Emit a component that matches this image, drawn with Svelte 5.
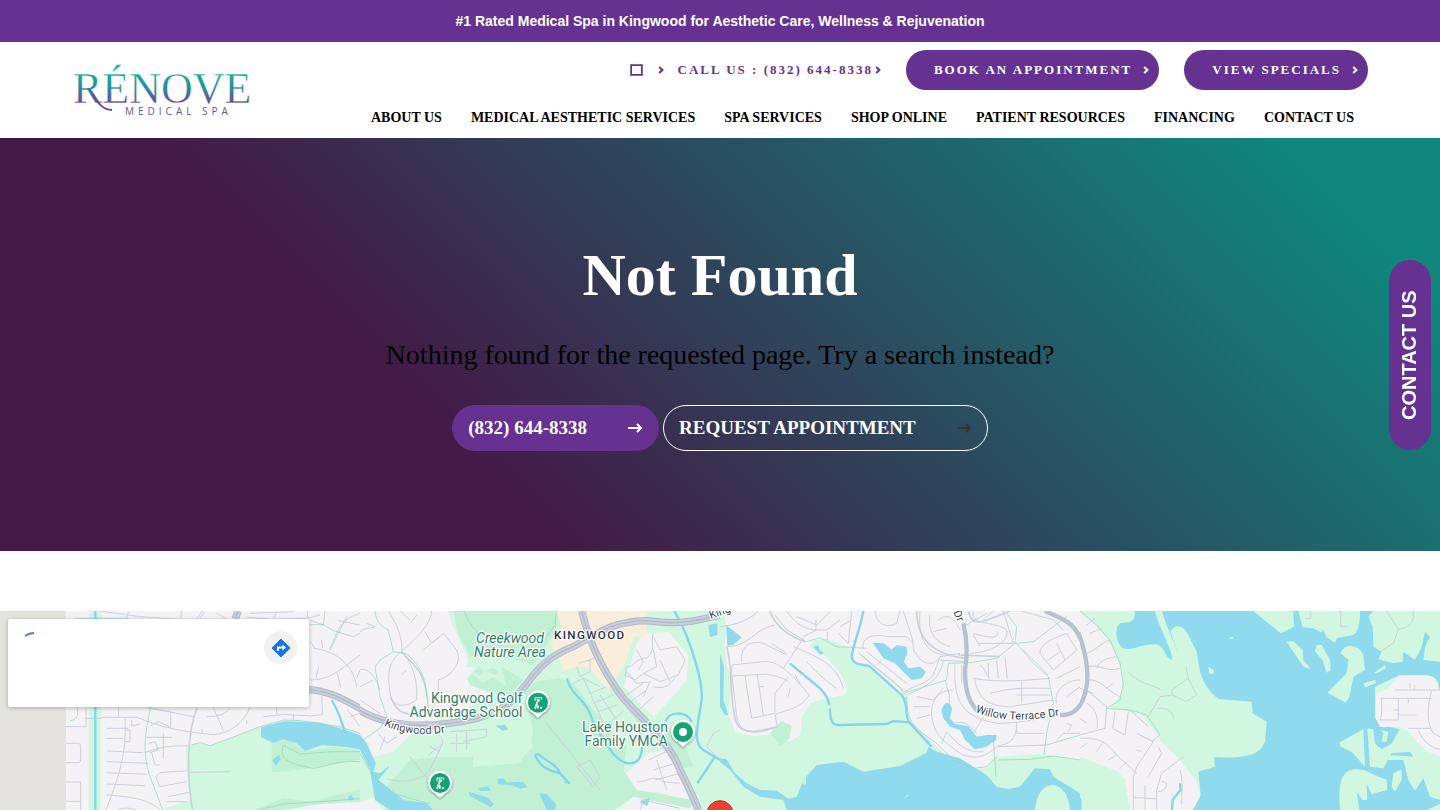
<script>
  const phone = '(832) 644-8338'

  const nav = [
    'About Us',
    'Medical Aesthetic Services',
    'Spa Services',
    'Shop Online',
    'Patient Resources',
    'Financing',
    'Contact Us',
  ]

  // map tiles, 1080 units wide each, drawn back to front
  const tiles = [
    {
      base: 'urban',
      shapes: [
        ['park', 'M268 33H302V630H268ZM556 450L580 430 630 437 690 415 780 380 870 358 960 366 1080 396V630H490L520 615 575 600 565 560Z'],
        ['wood', 'M815 425L860 418 920 452 1000 440 1080 450V480L1050 484 960 500 850 515H815ZM760 630L850 595 930 605 1080 568V630Z'],
        ['urban', 'M850 630L960 612 1080 606V630Z'],
        ['water', 'M783 382L850 364 960 368 1020 385 1080 405V448L1030 440 965 436 915 452 890 430 850 418 820 428 783 412ZM816 480L838 464 842 478 828 498ZM1044 592L1054 584 1062 598 1050 602Z'],
      ],
      streets: 'M375 355C380 460 360 520 318 630M320 385H385M320 415H370M322 453L430 458M320 485L445 490M320 518L440 523M320 552L435 557M320 585C400 590 450 600 480 630M350 630C380 620 390 625 410 630M198 380H258V322M198 430H236Q242 430 242 440V480Q242 488 234 488H198M198 546H242V630M198 604H242M305 352H410C480 380 540 395 640 404C690 400 730 370 750 322M356 322V352M440 322L580 350M450 378L475 365 512 382V335L455 325M395 360V378L420 372M372 390H390V425H372M448 430L465 425 475 450 448 458M490 400V475M454 455L465 495H480M435 458C480 440 520 436 568 438M640 322L670 392M620 350C660 350 680 340 690 322M606 388V400M740 360V372M560 512L480 518 468 530 478 560 560 545M505 590L566 577M500 605H560M790 350L850 343 935 348 968 343 965 290M830 320V342M880 343V360M570 517L690 515M300 33L420 50 540 58M600 55L615 35M380 55L385 36M545 33L542 55M650 40L680 57M740 52L820 58 830 35M750 40L880 35M820 58L922 55V33M922 55L960 45M940 145C1000 150 1060 190 1070 260M930 240C990 240 1020 210 1080 165M948 235L956 200M1012 220L1022 262M1080 210L1070 235M930 125L945 145M990 145C1010 110 1010 60 1080 40M1015 62L1080 75M928 60L970 75 975 33M965 120L968 145M590 57L608 33M1040 330C1060 345 1070 370 1080 380M1050 350L1080 340',
      wide: 'M592 322C560 400 560 520 577 630',
      trails: 'M230 322C238 345 230 360 210 362M258 355H306M452 322C430 420 430 470 450 530L488 630M440 412H515M225 55H385M575 435L600 428 630 437 690 415 780 380 850 360 900 362 1020 380 1080 400M928 74H970L1000 92 1060 110 1080 100M1040 50L990 150M850 436C840 470 850 490 940 505C980 500 1010 480 1080 485M850 436L900 462 1000 455 1080 455M775 630L850 612 960 605 1080 596',
      highway: 'M705 57L715 33M920 268C990 272 1030 298 1092 332',
      avenue: '',
      creeks: ['M286 33V630', 'M995 300C1020 340 1025 370 1036 400'],
    },
    {
      base: 'park',
      shapes: [
        ['urban', 'M0 33H265L278 75 292 105 325 180 320 200 345 205 320 240 405 278 300 340 230 365 150 405 100 455 40 470 25 430 0 412ZM850 100L925 96 985 165 980 240 930 300 880 350 790 260 830 130ZM798 520L870 455 930 450 960 530 990 605 900 578 830 572ZM770 630L830 585 870 600 1000 625V630ZM0 608L40 592 70 630H0Z'],
        ['shop', 'M590 33H860V110L822 110 790 200 745 272 690 205 650 200 612 212 590 165 572 130 605 80Z'],
        ['wood', 'M280 33H590L595 75 570 120 520 195 470 180 400 165 330 170 292 95ZM490 250L600 235 640 250 700 330 800 440 790 510 830 570 1000 600 990 625 820 590 760 630H110L60 580 150 480 235 470H340V500L480 490 520 400 500 300ZM320 235L340 222 365 250 400 232 440 260 425 200 490 240 450 285 380 275 330 255ZM890 370L960 400 1000 500 970 505ZM340 215L355 200 375 215 360 228ZM375 212L400 203 415 212 405 225Z'],
        ['park', 'M270 395L410 370 500 370 520 440 470 490 340 500V468H230Z'],
        ['water', 'M0 405L20 430 35 465 48 490 40 515 60 520 90 495 80 510 55 540 130 600 200 610 220 630H90L45 600 38 560 30 510 0 450ZM408 378L435 374 445 388 428 392ZM325 575L380 592 402 612 392 622 330 588ZM355 565L385 558 392 572 362 573ZM412 538L430 535 440 548 490 545 502 562 480 566 455 556 415 552ZM538 580L560 582 590 615 585 630H560ZM615 540L632 548 628 552 612 548ZM1045 75L1072 70V105L1050 112ZM846 600L870 595 862 618 840 608Z'],
      ],
      streets: 'M85 33C110 70 130 120 125 155C85 180 80 225 92 290C105 325 140 320 170 300C175 230 150 180 125 155C170 110 210 80 215 33M120 33L150 60M125 225L140 210M170 45L152 70M190 150L250 100 290 150C310 190 270 230 235 240M195 95L215 130 240 110M235 240V290C220 310 230 320 205 330M0 210C30 200 50 240 60 270M0 260L40 240M0 300L60 340M20 70L45 80M200 360C210 400 250 400 248 430L205 520C170 545 110 550 80 535M205 465L250 430M210 440L240 455M150 470L205 540M60 450L75 410M55 400L80 430 110 410M270 395L380 388V410L310 425M270 430H330M320 395V450M290 400V455M880 97C870 130 890 150 860 175C830 170 820 205 800 200L795 225 825 240 850 220 900 245 955 225 975 180 950 140 900 150 880 110M830 150L850 185 835 210M800 215L830 250 870 245 850 290M880 150L890 200 850 220M900 180L930 245M880 260C920 270 930 250 945 235M800 285L850 250M810 305L860 270M835 330L880 290M640 250L670 235 720 260M670 235L740 390M655 190L690 180 730 160M690 180L690 215 660 230 650 200M690 280L740 260M700 310L760 285M715 335L770 315M740 375L790 335M720 285L790 390M765 280L840 370M560 370L720 570M650 500L690 480 720 530 700 560 650 500M865 480L930 450M880 510L945 490M885 540L960 520M890 480L920 570M830 545C860 550 880 520 910 545L960 550M840 630L850 600 960 625M1040 440L1060 400 1080 390M1040 440L1080 480',
      wide: 'M125 155C150 190 200 200 205 330M92 290C110 340 140 345 165 340',
      trails: 'M45 33C50 75 70 80 85 90L100 155 135 160C170 180 200 230 200 290M0 95C20 80 40 85 45 80M100 155L60 180 45 200 60 290 80 350 60 385 0 425M312 33C330 80 350 100 400 130M590 33L585 75 560 110M0 460L40 530 100 580 210 612',
      highway: 'M-12 324C90 390 220 385 350 355C520 310 480 200 640 140C730 90 760 65 860 62C960 75 1000 65 1080 45M665 33C690 130 720 200 790 295C860 370 930 430 960 510C980 550 1000 590 1015 630',
      avenue: '',
      creeks: ['M943 33C1000 130 1030 260 1025 300C1010 390 1000 430 1030 450L1080 480M1065 470L1012 550', 'M620 235C640 300 680 290 700 370C750 450 770 490 810 490C850 490 850 440 840 400', 'M918 365C920 335 980 330 995 365', 'M525 465C540 500 560 510 600 520C590 490 550 480 535 462L525 465M600 520L628 550'],
    },
    {
      base: 'urban',
      shapes: [
        ['park', 'M0 33H12L18 80 14 140 22 200 35 250 30 350 45 395 100 408 175 400 210 425 240 405 245 350 270 310 310 295 375 285 380 260 360 220 320 170 270 140 285 120 320 116 390 145 400 190 440 190 540 280 565 290 560 350 650 440 700 485 760 505H800L828 470 970 462 1080 482V630H0V350ZM40 200L25 350H245V280L300 265 200 120Z'],
        ['urban', 'M40 90H240L270 145 320 170 360 220 380 260 375 285 310 295 270 310 245 350 240 405 210 425 175 400 100 408 45 395 30 350 35 250 22 200 14 140Z'],
        ['wood', 'M150 400L185 362 215 378 208 415 182 438Z'],
        ['water', 'M18 75L65 112 40 135 22 138ZM0 160L12 200 10 300 25 345 15 345 0 320ZM280 142L295 135 298 150 312 160 300 164ZM458 128L490 130 515 148 530 135 560 140 562 160 552 185 565 205 600 200 618 215 605 235 575 240 550 215 525 190 490 175ZM664 330Q680 290 696 325L690 355 705 372 745 378 770 410 800 405 830 405 828 420 800 440 765 448 735 420 720 390 690 380 670 355ZM230 590L250 540 290 495 370 485 430 515 540 498 620 458 625 440 650 455 720 475 800 525 830 560 865 568 900 560 945 505 990 508 1000 530 1080 580V630H200L190 600 120 590 70 560 30 510 0 485V475L20 478 45 520 80 550 120 570 170 572 205 596Z'],
        ['park', 'M945 630C950 580 970 555 1000 555C1030 560 1047 590 1050 630ZM245 550L258 532 258 555ZM552 596L562 584 566 586Z'],
      ],
      streets: 'M0 80C60 75 100 50 115 33M20 140C90 140 95 90 165 75M35 195L130 185C180 180 220 230 268 285C240 330 190 330 165 345L172 380C100 410 60 400 50 350L35 220V195M35 228L140 222C180 230 200 240 205 245M205 230L165 280 165 340M75 228L95 355 165 340M112 225L130 345M115 260H132M65 185C60 140 90 120 130 130L200 165M155 130L200 160M190 205L250 115M200 33C230 80 270 90 290 90L320 90 360 60M288 60V90M230 50L290 75 330 35M322 95V120M250 110L290 90M395 33L385 130 355 100M360 80L395 60M220 140C290 170 350 190 370 265M260 185C300 230 330 250 350 265M225 225L240 250M210 265L205 290M465 33C470 75 500 85 530 70L540 33M550 33C570 100 580 110 580 150C610 200 640 200 660 170L720 160M430 145C420 110 470 100 500 110H560L580 130M440 155L560 250M425 165L555 275M600 33C590 140 640 160 670 165M630 45C620 110 660 130 690 140M655 60C680 40 700 50 720 90M640 95L680 85M660 170L640 225C610 260 590 250 555 275M670 180C660 240 620 260 560 285M470 195L485 180M590 290L640 300 670 265M580 320H630M590 355L630 345M760 33C750 80 820 60 860 90C870 130 800 160 750 160M760 100C820 120 840 110 830 95M775 130L880 130 850 33M790 60L820 33M780 140L760 105M735 185L660 180M705 190C700 300 720 350 830 370C900 370 960 355 990 350M725 195V250M780 195C800 210 800 230 810 235M760 235C840 250 920 240 990 235M765 235C770 290 800 320 870 320L1000 300M810 280C880 260 940 265 990 265M805 190V235M830 180L835 235M855 170L862 238M905 240V310M890 285H990M700 270C650 270 630 310 635 350C645 410 670 420 700 445C750 490 800 470 830 440C860 430 890 430 890 370M700 370C740 360 750 380 770 400M680 395C710 430 740 460 790 455M835 440L980 435M890 400H970M890 375V400M790 350L760 400M910 150L985 225M960 160C960 130 1010 110 1040 100L1070 150 1000 210 960 160M985 180L1020 155M1010 130L1035 180M1030 90L1000 60 905 33M1080 200L1010 235M1080 240C1030 240 1000 280 1010 310M1040 290L1080 260M1080 400H1030L1010 420M1040 370L1055 375 1045 395',
      wide: 'M150 33C165 80 210 110 255 125M20 140C40 200 25 300 50 370C70 410 130 390 172 380M715 165L840 170M745 33C755 90 800 60 870 33M590 33C590 120 640 165 740 175',
      trails: 'M165 45L200 90 260 125 300 113 350 140 395 142 440 145M415 155C450 200 540 250 550 280L680 240 685 190 750 188 830 175 885 130 940 125 1040 50M885 130L890 80 860 40M890 130L940 190 985 230 1000 310 980 400 972 465M740 75L800 40M675 240L688 285V325M560 290C560 370 580 380 650 430L700 480 760 505 800 500 830 470M665 430L680 395M820 415L828 530M835 480L930 478 1000 468 1080 480M980 435L1080 405',
      highway: '',
      avenue: 'M730 70C740 110 745 150 735 210C735 280 750 310 775 335M1020 345C1050 345 1070 335 1088 305M975 33C1030 60 1065 62 1090 138',
      creeks: ['M430 33C420 90 400 130 395 170C400 200 430 190 450 200L545 285C570 320 550 350 570 370L635 440', 'M210 190L300 265Q325 290 328 315', 'M330 325C330 360 335 375 355 375L500 372 520 363 565 367'],
    },
    {
      base: 'water',
      shapes: [
        ['park', 'M0 33H165C165 70 150 65 120 70C100 85 110 135 130 145C160 155 200 125 235 135C255 145 260 180 275 178C285 165 235 80 225 33H245L262 80 295 160 272 95C285 70 310 75 325 105L350 155 360 215C375 260 400 290 420 298L515 305 518 340 560 365 555 425C540 465 500 475 402 472L405 500 355 515 362 585 338 630H0Z'],
        ['park', 'M520 33H640L642 80 602 100ZM655 33H840C840 70 835 95 820 105L770 115 765 128 740 112 728 88 725 98 700 85 668 82ZM880 33H1080V185L1030 180 1035 140 1050 110 1035 95 1025 140 1005 180 970 155 968 185 940 190 895 178 905 155 880 140 878 80 865 50ZM620 125L640 124 668 150 670 180 693 208 670 200 640 155ZM710 135H725L750 180 752 210 740 218 728 180 705 155ZM782 160C790 130 835 130 850 165L855 210 820 230 808 290 798 308 742 278 800 220 805 180ZM850 250L885 240 888 250 855 262ZM882 218L915 196 918 205 890 220ZM885 260L960 225H1040C1080 230 1075 260 1080 270V600L1050 590 1030 535 1005 572 985 540 970 480H905L930 465 1000 470 990 455 935 460 910 505 870 500 862 385 880 388 885 430 905 448 935 430 958 390 900 380 885 350ZM778 428L850 388 855 500 815 455 782 440ZM780 630C770 520 800 500 850 510L920 540 922 570 875 582 860 550 862 600 848 600 830 575 838 630ZM935 560L940 520 965 508 965 540 945 575ZM385 200L402 210 400 222 388 220ZM448 112L460 110 460 116 448 116ZM1040 630L1080 612V630Z'],
        ['urban', 'M890 275L960 228H1040C1070 232 1070 255 1080 270V468C1050 465 1010 430 985 395L960 380H900L885 350ZM0 38C60 80 100 130 125 210C135 290 110 300 90 325L180 340C210 370 230 400 245 425L300 480 350 545 360 590 338 630H150L135 540 115 515 0 470Z'],
        ['park', 'M885 275L950 235 925 265 890 280Z'],
        ['water', 'M900 385L925 380 960 388 938 398 940 420 920 440 895 440 890 410Z'],
        ['park', 'M902 390L910 400 905 425 920 425 925 395Z'],
        ['water', 'M0 590L5 600V630H0Z'],
      ],
      streets: 'M20 75L45 55M30 100L65 85M20 160C50 150 60 130 90 120M50 205C60 180 80 175 110 170M25 200C60 190 80 220 118 205M20 240C60 235 80 270 118 290M80 265L98 250M0 265L40 280M20 310C40 320 55 340 52 385M0 355L20 370M0 415C70 410 90 440 110 465L170 520M50 455L70 425M85 480L110 465M120 505L140 485M0 445L20 430M105 335L98 385 135 405 145 335M80 320L75 385 0 405M170 400L220 425 170 500 160 530V630M185 455L170 450M180 405L210 420M235 440L245 460 205 530M310 470L245 520 230 570V630M245 545C270 540 260 575 235 575M300 510C310 540 305 580 305 612M195 555V630M160 592L230 597M145 215C170 250 210 250 240 268M318 200L325 235 275 270 278 285 240 290 205 350M325 235L350 285 318 305 278 285M232 325C260 325 280 330 280 358M900 295H1055M905 295V345L900 360 955 360V295M940 330H958M958 345H1010M985 295V310M945 270H1080M990 250V265M1003 255V268M1055 270C1040 330 1040 370 1060 400L1080 410M985 385L1050 385M1015 390C1030 430 1060 445 1080 448M920 33L955 88 940 130 900 155M955 88C990 85 1005 60 1000 33M782 33V80H803M692 33V55L675 55',
      wide: '',
      trails: 'M0 33L50 75 90 120 120 190 130 250 120 300 80 325 150 330 200 345 240 405M25 275L80 320M150 330L205 380M240 405L215 425',
      highway: '',
      avenue: 'M-4 100C25 180 38 260 -4 322',
      creeks: ['M300 550L302 570 278 600 276 630'],
    },
  ]

  const golfPins = [
    { x: 1614, y: 275 },
    { x: 1320, y: 516 },
  ]
</script>

{#snippet chevron()}
  <svg class="chevron" viewBox="0 0 6 8" aria-hidden="true"><path d="M1.2 1 4.4 4 1.2 7" /></svg>
{/snippet}

{#snippet arrow()}
  <svg class="arrow" viewBox="0 0 16 12" aria-hidden="true"><path d="M1 6H14M10 2l4 4-4 4" /></svg>
{/snippet}

<div class="page">
  <p class="promo">#1 Rated Medical Spa in Kingwood for Aesthetic Care, Wellness &amp; Rejuvenation</p>

  <header>
    <a class="logo" href="/" aria-label="Rénove Medical Spa">
      <svg viewBox="0 0 184 60">
        <defs>
          <linearGradient id="ink" gradientUnits="userSpaceOnUse" x1="0" y1="4" x2="0" y2="48">
            <stop offset="0.1" stop-color="#12b5a3" />
            <stop offset="0.5" stop-color="#2390a0" />
            <stop offset="0.9" stop-color="#664a96" />
          </linearGradient>
        </defs>
        <text class="brand" x="1" y="43">RÉNOVE</text>
        <path class="swash" d="M20 34C26 43 31 50 40 50" />
        <text class="tagline" x="53" y="55">MEDICAL SPA</text>
      </svg>
    </a>

    <div class="menus">
      <div class="actions">
        <a class="plain box" href="#search" aria-label="Search"><i></i>{@render chevron()}</a>
        <a class="plain" href="tel:8326448338">CALL US : {phone}{@render chevron()}</a>
        <a class="pill" href="#book">BOOK AN APPOINTMENT {@render chevron()}</a>
        <a class="pill" href="#specials">VIEW SPECIALS {@render chevron()}</a>
      </div>
      <nav>
        {#each nav as item}
          <a href="#menu">{item}</a>
        {/each}
      </nav>
    </div>
  </header>

  <section class="hero">
    <h1>Not Found</h1>
    <p>Nothing found for the requested page. Try a search instead?</p>
    <div class="cta">
      <a class="call" href="tel:8326448338">{phone}{@render arrow()}</a>
      <a class="request" href="#book">REQUEST APPOINTMENT{@render arrow()}</a>
    </div>
  </section>

  <section class="map">
    <svg class="canvas" viewBox="0 0 4320 597" preserveAspectRatio="xMidYMin slice" role="img" aria-label="Map of Kingwood">
      {#each tiles as tile, i}
        <svg x={i * 1080} y="0" width="1080" height="597" viewBox="0 33 1080 597">
          <rect class={tile.base} y="33" width="1080" height="597" />
          {#each tile.shapes as [kind, d]}
            <path class={kind} {d} />
          {/each}
          <path class="street" d={tile.streets} />
          <path class="street wide" d={tile.wide} />
          <path class="trail" d={tile.trails} />
          {#each tile.creeks as d}
            <path class="creek" {d} />
          {/each}
          <path class="avenue" d={tile.avenue} />
          <path class="highway" d={tile.highway} />
          <path class="lanes" d={tile.highway} />
          <path class="median" d={tile.highway} />
        </svg>
      {/each}
      <rect class="unloaded" width="198" height="597" />

      <defs>
        <path id="kingwood-dr" d="M1152 343Q1240 384 1354 361" />
        <path id="kingwood-top" d="M2132 24L2220 -8" />
        <path id="willow" d="M2926 303Q3030 345 3200 309" />
        <path id="dr" d="M2860 4L2890 70" />
      </defs>

      <g class="road-name">
        <text><textPath href="#kingwood-dr">Kingwood Dr</textPath></text>
        <text><textPath href="#kingwood-top">King</textPath></text>
        <text><textPath href="#willow">Willow Terrace Dr</textPath></text>
        <text><textPath href="#dr">Dr</textPath></text>
      </g>
      <text class="city" x="1662" y="85">KINGWOOD</text>
      <g class="place nature">
        <text x="1632" y="95">Creekwood</text>
        <text x="1638" y="138">Nature Area</text>
      </g>
      <g class="place">
        <text x="1567" y="276">Kingwood Golf</text>
        <text x="1567" y="318">Advantage School</text>
        <text x="2004" y="363">Lake Houston</text>
        <text x="2003" y="405">Family YMCA</text>
      </g>

      {#each golfPins as pin}
        <g class="pin" transform="translate({pin.x} {pin.y})">
          <path class="drop" d="M0 46L-16 31A36 36 0 1 1 16 31Z" />
          <circle r="30" />
          <path class="club" d="M-9 -5V-15H11V-9" />
          <path class="golfer" d="M-1 -5L-5 6 -9 18M-5 6L0 10 -1 18M-1 -4L6 -8" />
          <circle class="dot" cx="-1" cy="-9" r="3" />
          <circle class="dot" cx="9" cy="15" r="3" />
        </g>
      {/each}
      <g class="pin" transform="translate(2049 363)">
        <path class="drop" d="M0 46L-16 31A36 36 0 1 1 16 31Z" />
        <circle r="30" />
        <circle class="dot" r="12" />
      </g>
      <circle class="target" cx="2160" cy="608" r="39" />
      <circle class="bull" cx="2160" cy="610" r="14" />
    </svg>

    <div class="place-card">
      <svg class="spinner" viewBox="0 0 12 6" aria-hidden="true"><path d="M1 5Q5 2 10 2" /></svg>
      <button aria-label="Directions">
        <svg viewBox="0 0 20 20" aria-hidden="true">
          <path class="sign" d="M10 1 19 10 10 19 1 10Z" />
          <path class="turn" d="M7 13V9.500H12.500" />
          <path class="tip" d="M11.500 6.500 15 9.500 11.500 12.500Z" />
        </svg>
      </button>
    </div>
  </section>

  <a class="contact-tab" href="#contact">CONTACT US</a>
</div>

<style>
  :global(body) {
    font-family: "Liberation Serif", "Times New Roman", serif;
    background: #fff;
  }

  .page {
    min-height: 100vh;
    display: flex;
    flex-direction: column;
  }

  a { text-decoration: none; color: inherit; }

  .promo {
    margin: 0;
    padding: 12px;
    font: bold 14px/18px "Liberation Sans", Arial, sans-serif;
    text-align: center;
    color: #fff;
    background: #653291;
  }

  header {
    display: flex;
    justify-content: space-between;
    align-items: flex-start;
    padding: 8px 72px 10px;
  }

  .logo { padding-top: 10px; }
  .logo svg { display: block; width: 184px; }

  .brand {
    font-size: 44px;
    fill: url(#ink);
    stroke: #fff;
    stroke-width: 0.4px;
  }

  .swash {
    fill: none;
    stroke: #664a96;
    stroke-width: 2;
  }

  .tagline {
    font: 10px "Open Sans", sans-serif;
    letter-spacing: 4px;
    fill: #5d5a9b;
  }

  .menus {
    display: flex;
    flex-direction: column;
    align-items: flex-end;
    gap: 18px;
  }

  .actions {
    display: flex;
    align-items: center;
    gap: 25px;
    font-size: 13px;
    font-weight: bold;
    letter-spacing: 2px;
    color: #653291;
  }

  .plain { display: flex; align-items: center; gap: 2px; }

  .box { gap: 16px; margin-right: -11px; }

  .box i {
    width: 9px;
    height: 8px;
    border: 1px solid #653291;
    outline: 1px solid #8a65ac;
  }

  .pill {
    display: flex;
    align-items: center;
    gap: 11px;
    height: 40px;
    padding: 0 10px 0 28px;
    border-radius: 20px;
    color: #fff;
    background: #653291;
  }

  .chevron {
    width: 6px;
    height: 8px;
    fill: none;
    stroke: currentColor;
    stroke-width: 2;
  }

  nav {
    display: flex;
    gap: 29px;
    padding-right: 14px;
    font-size: 14px;
    line-height: 20px;
    font-weight: bold;
    text-transform: uppercase;
    color: #000;
  }

  .hero {
    padding: 100px 24px;
    text-align: center;
    background: linear-gradient(45deg, #431945 30%, #10867c 91%);
  }

  h1 {
    margin: 0;
    font-size: 60px;
    line-height: 74px;
    color: #fff;
  }

  .hero p {
    margin: 25px 0 33px;
    font-size: 28px;
    line-height: 35px;
    color: #000;
  }

  .cta {
    display: flex;
    justify-content: center;
    gap: 4px;
  }

  .cta a {
    display: flex;
    align-items: center;
    gap: 40px;
    height: 44px;
    padding: 0 15px;
    border: 1px solid #fff;
    border-radius: 23px;
    font-size: 19px;
    font-weight: bold;
    color: #fff;
  }

  .cta .call { background: #653291; border-color: #653291; }

  .arrow {
    width: 16px;
    height: 12px;
    fill: none;
    stroke: currentColor;
    stroke-width: 2;
  }

  .request .arrow { color: #333; }

  .map {
    position: relative;
    flex: 1;
    margin-top: 60px;
    min-height: 199px;
    overflow: hidden;
    background: #e5e3df;
  }

  .canvas {
    position: absolute;
    width: 100%;
    height: 100%;
  }

  .urban { fill: #f4f2f5; }
  .park { fill: #d1f7e0; }
  .wood { fill: #c2f0d4; }
  .shop { fill: #f9eddb; }
  .water { fill: #90daee; }
  .unloaded { fill: #e5e3df; }

  .street, .trail, .creek, .avenue, .highway, .lanes, .median { fill: none; }
  .street { stroke: #cbd1dc; stroke-width: 3; }
  .wide { stroke-width: 5; }
  .trail { stroke: #91d3b7; stroke-width: 2; }
  .creek { stroke: #84d5ec; stroke-width: 7; }
  .avenue { stroke: #b9c1cd; stroke-width: 13; }
  .highway { stroke: #b1b8c7; stroke-width: 22; }
  .lanes { stroke: #c9cfdb; stroke-width: 16; }
  .median { stroke: #b1b8c7; stroke-width: 4; }

  .canvas text {
    paint-order: stroke;
    stroke: #fff;
    stroke-width: 7px;
    stroke-linejoin: round;
    font-family: Roboto, sans-serif;
  }

  .road-name { font-size: 33px; fill: #3c4353; }

  .city {
    font-size: 35px;
    font-weight: 500;
    letter-spacing: 4px;
    fill: #2b3142;
  }

  .place { font-size: 42px; text-anchor: end; fill: #31806a; }
  .nature { font-style: italic; }

  .pin circle { fill: #14a374; }
  .pin .drop { fill: #fff; filter: drop-shadow(0 3px 3px #0006); }
  .pin .dot { fill: #fff; }
  .golfer { fill: none; stroke: #fff; stroke-width: 5; }
  .club { fill: none; stroke: #fff; stroke-width: 3; }

  .target { fill: #ea4335; stroke: #c5221f; stroke-width: 3; }
  .bull { fill: #b31412; }

  .place-card {
    position: absolute;
    top: 8px;
    left: 8px;
    display: flex;
    justify-content: space-between;
    align-items: flex-start;
    width: 301px;
    height: 88px;
    padding: 12px 12px 12px 16px;
    box-sizing: border-box;
    border-radius: 2px;
    background: #fff;
    box-shadow: 0 1px 4px #0004;
  }

  .spinner {
    width: 12px;
    height: 6px;
    fill: none;
    stroke: #4f7ed0;
    stroke-width: 2;
  }

  .place-card button {
    display: grid;
    place-items: center;
    width: 33px;
    height: 33px;
    padding: 0;
    border: 0;
    border-radius: 50%;
    background: #f1f1f3;
  }

  .place-card button svg { width: 20px; height: 20px; }
  .sign { fill: #1a73e8; stroke: #1a73e8; stroke-linejoin: round; }
  .turn { fill: none; stroke: #fff; stroke-width: 2; }
  .tip { fill: #fff; }

  .contact-tab {
    position: fixed;
    top: 260px;
    right: 9px;
    display: flex;
    align-items: center;
    justify-content: center;
    width: 42px;
    height: 190px;
    border-radius: 21px;
    writing-mode: vertical-rl;
    transform: rotate(180deg);
    font: bold 20px "Liberation Sans", Arial, sans-serif;
    color: #fff;
    background: #653291;
  }
</style>
